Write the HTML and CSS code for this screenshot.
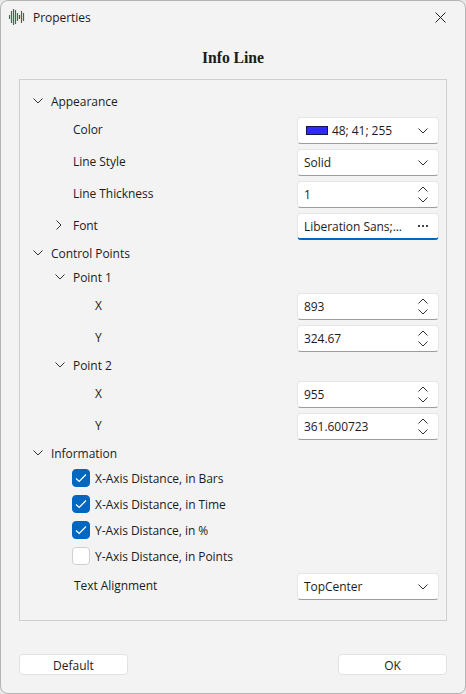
FILE: index.html
```html
<!DOCTYPE html>
<html lang="en">
  <head>
    <meta charset="UTF-8" />
    <title>Properties</title>
    <link rel="stylesheet" href="styles.css">
  </head>
  <body>
    <svg width="0" height="0" class="defs">
      <symbol id="down" viewBox="0 0 10 6"><path d="M0.5 0.5 L5 5 L9.5 0.5" fill="none" stroke="#333" stroke-width="1"/></symbol>
      <symbol id="up" viewBox="0 0 10 6"><path d="M0.5 5.5 L5 1 L9.5 5.5" fill="none" stroke="#333" stroke-width="1"/></symbol>
      <symbol id="right" viewBox="0 0 6 10"><path d="M0.5 0.5 L5 5 L0.5 9.5" fill="none" stroke="#333" stroke-width="1"/></symbol>
      <symbol id="tick" viewBox="0 0 12 10"><path d="M1 5.5 L4.2 8.5 L11 1.5" fill="none" stroke="#fff" stroke-width="1.2"/></symbol>
      <symbol id="more" viewBox="0 0 10 2"><path d="M0 0h2v2H0zM4 0h2v2H4zM8 0h2v2H8z" fill="#444"/></symbol>
    </svg>

    <div class="window">
      <div class="titlebar">
        <svg class="app-icon" width="16" height="16" viewBox="0 0 16 16">
          <path d="M0.500 6v4M2.500 2v12M4.500 0v16M6.500 1v14M8.500 4v8M12.500 2v12M14.500 4v8" stroke="#1f7a4d" stroke-width="1.2" fill="none"/>
          <path d="M10.500 6v4" stroke="#a8231a" stroke-width="1.2" fill="none"/>
        </svg>
        <span class="title-text">Properties</span>
        <svg class="close" width="11" height="11" viewBox="0 0 11 11"><path d="M0.5 0.5 L10.5 10.500 M10.500 0.5 L0.5 10.5" stroke="#222" fill="none"/></svg>
      </div>

      <h1 class="heading">Info Line</h1>

      <div class="panel">
        <!-- Appearance -->
        <div class="row head lvl0"><svg class="chev"><use href="#down"/></svg><span>Appearance</span></div>
        <div class="row field">
          <span class="label lvl1-text">Color</span>
          <div class="control"><i class="swatch"></i><span>48; 41; 255</span><svg class="arrow"><use href="#down"/></svg></div>
        </div>
        <div class="row field">
          <span class="label lvl1-text">Line Style</span>
          <div class="control"><span>Solid</span><svg class="arrow"><use href="#down"/></svg></div>
        </div>
        <div class="row field">
          <span class="label lvl1-text">Line Thickness</span>
          <div class="control"><span>1</span><div class="spin"><svg><use href="#up"/></svg><svg><use href="#down"/></svg></div></div>
        </div>
        <div class="row field">
          <span class="label lvl1"><svg class="chev-right"><use href="#right"/></svg>Font</span>
          <div class="control focused"><span>Liberation Sans;...</span><svg class="more"><use href="#more"/></svg></div>
        </div>

        <!-- Control Points -->
        <div class="row head lvl0"><svg class="chev"><use href="#down"/></svg><span>Control Points</span></div>
        <div class="row head lvl1"><svg class="chev"><use href="#down"/></svg><span>Point 1</span></div>
        <div class="row field">
          <span class="label lvl2-text">X</span>
          <div class="control"><span>893</span><div class="spin"><svg><use href="#up"/></svg><svg><use href="#down"/></svg></div></div>
        </div>
        <div class="row field">
          <span class="label lvl2-text">Y</span>
          <div class="control"><span>324.67</span><div class="spin"><svg><use href="#up"/></svg><svg><use href="#down"/></svg></div></div>
        </div>
        <div class="row head lvl1"><svg class="chev"><use href="#down"/></svg><span>Point 2</span></div>
        <div class="row field">
          <span class="label lvl2-text">X</span>
          <div class="control"><span>955</span><div class="spin"><svg><use href="#up"/></svg><svg><use href="#down"/></svg></div></div>
        </div>
        <div class="row field">
          <span class="label lvl2-text">Y</span>
          <div class="control"><span>361.600723</span><div class="spin"><svg><use href="#up"/></svg><svg><use href="#down"/></svg></div></div>
        </div>

        <!-- Information -->
        <div class="row head lvl0"><svg class="chev"><use href="#down"/></svg><span>Information</span></div>
        <div class="check"><span class="box on"><svg><use href="#tick"/></svg></span>X-Axis Distance, in Bars</div>
        <div class="check"><span class="box on"><svg><use href="#tick"/></svg></span>X-Axis Distance, in Time</div>
        <div class="check"><span class="box on"><svg><use href="#tick"/></svg></span>Y-Axis Distance, in %</div>
        <div class="check"><span class="box"></span>Y-Axis Distance, in Points</div>
        <div class="row field">
          <span class="label align-text">Text Alignment</span>
          <div class="control"><span>TopCenter</span><svg class="arrow"><use href="#down"/></svg></div>
        </div>
      </div>

      <div class="footer">
        <button class="btn">Default</button>
        <button class="btn">OK</button>
      </div>
    </div>
  </body>
</html>
```
FILE: styles.css
```css
html {
  background: #e8e8e8;
}
body {
  margin: 0;
  font-family: "Open Sans", "Noto Sans", sans-serif;
  font-size: 12px;
  letter-spacing: -0.05px;
  color: #1c1c1c;
}
.defs {
  display: block;
  height: 0;
}
.window {
  box-sizing: border-box;
  width: 466px;
  height: 694px;
  background: #f3f3f3;
  border: 1px solid #b4b4b4;
  border-radius: 8px;
  display: flex;
  flex-direction: column;
}
.titlebar {
  height: 32px;
  flex-shrink: 0;
  display: flex;
  align-items: center;
  padding: 0 19px 0 8px;
}
.app-icon {
  margin-right: 8px;
}
.title-text {
  flex: 1;
  padding-top: 1px;
}
.heading {
  margin: 0;
  height: 46px;
  line-height: 50px;
  text-align: center;
  font-family: "Liberation Serif", serif;
  font-size: 15.7px;
  font-weight: bold;
}
.panel {
  box-sizing: border-box;
  height: 542px;
  margin: 0 18px;
  padding: 9px 7px 0 0;
  border: 1px solid #cfcfcf;
}
.row {
  display: flex;
  align-items: center;
}
.head {
  height: 24px;
}
.head span {
  margin-left: 8px;
}
.lvl0 {
  padding-left: 13px;
}
.lvl1 {
  padding-left: 35px;
}
.chev {
  width: 10px;
  height: 6px;
  flex-shrink: 0;
}
.field {
  height: 32px;
  justify-content: space-between;
}
.label {
  display: flex;
  align-items: center;
}
.lvl1-text {
  padding-left: 53px;
}
.align-text {
  padding-left: 54px;
}
.lvl2-text {
  padding-left: 75px;
}
.label.lvl1 {
  padding-left: 36px;
}
.chev-right {
  width: 6px;
  height: 10px;
  margin-right: 11px;
}
.control {
  box-sizing: border-box;
  width: 142px;
  height: 27px;
  margin-top: 3px;
  padding: 0 10px 0 6px;
  display: flex;
  align-items: center;
  background: #fff;
  border: 1px solid #e6e6e6;
  border-bottom-color: #9c9c9c;
  border-radius: 4px;
}
.control span:first-of-type {
  flex: 1;
}
.focused {
  border-bottom: 2px solid #0067c0;
}
.more {
  width: 10px;
  height: 2px;
}
.swatch {
  box-sizing: border-box;
  width: 22px;
  height: 9px;
  margin: 0 4px 0 2px;
  background: #3029ff;
  border: 1px solid #16134d;
}
.arrow {
  width: 10px;
  height: 6px;
}
.spin {
  display: flex;
  flex-direction: column;
  gap: 5px;
}
.spin svg {
  display: block;
  width: 10px;
  height: 6px;
}
.check {
  height: 26px;
  padding-left: 52px;
  display: flex;
  align-items: center;
}
.box {
  box-sizing: border-box;
  width: 18px;
  height: 18px;
  margin-right: 5px;
  display: flex;
  align-items: center;
  justify-content: center;
  background: #fff;
  border: 1px solid #d0d0d0;
  border-radius: 4px;
}
.box.on {
  background: #0067c0;
  border-color: #0067c0;
}
.box svg {
  width: 12px;
  height: 10px;
}
.footer {
  display: flex;
  justify-content: space-between;
  padding: 33px 18px 0;
}
.btn {
  width: 109px;
  height: 21px;
  padding: 1px 0 0;
  font: inherit;
  color: inherit;
  background: #fff;
  border: 1px solid #e2e2e2;
  border-radius: 4px;
}
```
